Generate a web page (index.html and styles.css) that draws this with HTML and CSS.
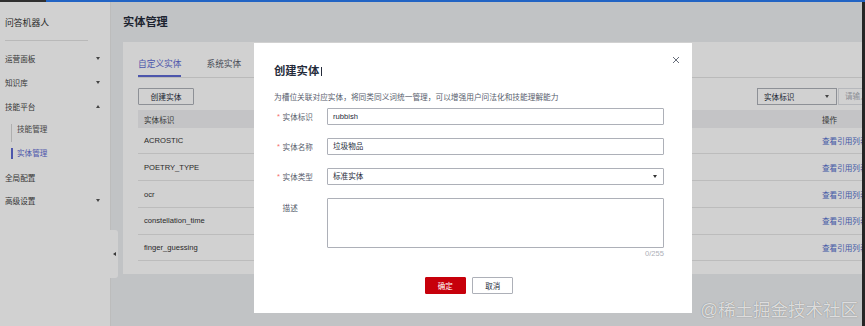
FILE: index.html
```html
<!DOCTYPE html>
<html lang="zh-CN">
<head>
    <meta charset="UTF-8">
    <meta name="viewport" content="width=device-width, initial-scale=1.0">
    <title>实体管理</title>
    <link rel="stylesheet" href="styles.css">
</head>
<body>
    <div class="topbar">
        <span class="topbar-dark"></span>
        <span class="topbar-blue"></span>
    </div>

    <div class="app">
        <aside class="sidebar">
            <div class="sidebar-title">问答机器人</div>
            <ul class="menu">
                <li class="menu-item">运营面板 <svg class="caret" viewBox="0 0 4 3"><path d="M0 0h4L2 3z"/></svg></li>
                <li class="menu-item">知识库 <svg class="caret" viewBox="0 0 4 3"><path d="M0 0h4L2 3z"/></svg></li>
                <li class="menu-item">技能平台 <svg class="caret" viewBox="0 0 4 3"><path d="M0 3h4L2 0z"/></svg></li>
                <li class="submenu">
                    <div class="submenu-item">技能管理</div>
                    <div class="submenu-item active">实体管理</div>
                </li>
                <li class="menu-item">全局配置</li>
                <li class="menu-item">高级设置 <svg class="caret" viewBox="0 0 4 3"><path d="M0 0h4L2 3z"/></svg></li>
            </ul>
            <div class="collapse-handle">
                <svg viewBox="0 0 3 4"><path d="M3 0v4L0 2z"/></svg>
            </div>
        </aside>

        <main class="main">
            <h1 class="page-title">实体管理</h1>

            <div class="card">
                <div class="tabs">
                    <div class="tab active">自定义实体</div>
                    <div class="tab">系统实体</div>
                </div>

                <div class="toolbar">
                    <button class="btn-outline">创建实体</button>
                    <div class="search">
                        <div class="search-select">实体标识 <svg class="caret" viewBox="0 0 4 3"><path d="M0 0h4L2 3z"/></svg></div>
                        <div class="search-input">请输入关键字</div>
                    </div>
                </div>

                <div class="table">
                    <div class="table-row table-head">
                        <div class="cell">实体标识</div>
                        <div class="cell">操作</div>
                    </div>
                    <div class="table-row">
                        <div class="cell">ACROSTIC</div>
                        <div class="cell link">查看引用列表</div>
                    </div>
                    <div class="table-row">
                        <div class="cell">POETRY_TYPE</div>
                        <div class="cell link">查看引用列表</div>
                    </div>
                    <div class="table-row">
                        <div class="cell">ocr</div>
                        <div class="cell link">查看引用列表</div>
                    </div>
                    <div class="table-row">
                        <div class="cell">constellation_time</div>
                        <div class="cell link">查看引用列表</div>
                    </div>
                    <div class="table-row">
                        <div class="cell">finger_guessing</div>
                        <div class="cell link">查看引用列表</div>
                    </div>
                </div>
            </div>
        </main>

        <div class="edge"></div>
    </div>

    <div class="mask"></div>

    <div class="dialog">
        <svg class="dialog-close" viewBox="0 0 8 8"><path d="M1 1l6 6M7 1L1 7"/></svg>
        <h2 class="dialog-title">创建实体<span class="caret-line"></span></h2>
        <p class="dialog-desc">为槽位关联对应实体，将同类同义词统一管理，可以增强用户问法化和技能理解能力</p>

        <div class="form">
            <div class="form-row">
                <label class="form-label"><span class="star">*</span>实体标识</label>
                <div class="field">rubbish</div>
            </div>
            <div class="form-row">
                <label class="form-label"><span class="star">*</span>实体名称</label>
                <div class="field">垃圾物品</div>
            </div>
            <div class="form-row">
                <label class="form-label"><span class="star">*</span>实体类型</label>
                <div class="field field-select">标准实体 <svg class="caret dark" viewBox="0 0 4 3"><path d="M0 0h4L2 3z"/></svg></div>
            </div>
            <div class="form-row form-row-area">
                <label class="form-label"><span class="star hidden">*</span>描述</label>
                <div class="field field-area"></div>
            </div>
            <div class="counter">0/255</div>
        </div>

        <div class="dialog-footer">
            <button class="btn-primary">确定</button>
            <button class="btn-default">取消</button>
        </div>
    </div>

    <div class="watermark">@稀土掘金技术社区</div>
</body>
</html>
```

FILE: styles.css
```css
* {
    margin: 0;
    padding: 0;
    box-sizing: border-box;
    font-family: 'Liberation Sans', 'Noto Sans CJK SC', sans-serif;
}

body {
    width: 865px;
    height: 326px;
    overflow: hidden;
    display: flex;
    flex-direction: column;
    background: #eceef1;
    color: #444;
    font-size: 7.6px;
}

ul {
    list-style: none;
}

/* top strip */
.topbar {
    display: flex;
    height: 2px;
}

.topbar-dark {
    width: 46px;
    background: #3b3b3b;
}

.topbar-blue {
    flex: 1;
    background: #2a7bf0;
}

.app {
    flex: 1;
    display: flex;
    min-height: 0;
}

/* sidebar */
.sidebar {
    position: relative;
    width: 111px;
    background: #fff;
    border-right: 1px solid #e6e6e6;
}

.sidebar-title {
    margin-left: 5px;
    width: 83px;
    height: 39px;
    padding-top: 14.7px;
    line-height: 12px;
    font-size: 8.8px;
    color: #333;
    border-bottom: 1px solid #e2e2e2;
}

.menu {
    margin-top: 5.8px;
}

.menu-item {
    display: flex;
    align-items: center;
    justify-content: space-between;
    height: 23.7px;
    padding: 0 10px 0 5px;
    color: #444;
}

.caret {
    width: 4px;
    height: 3px;
    fill: #555;
}

.caret.dark {
    fill: #333;
}

.submenu-item {
    position: relative;
    height: 23.7px;
    line-height: 23.7px;
    padding-left: 17px;
    color: #555;
}

.submenu-item::before {
    content: '';
    position: absolute;
    left: 11px;
    top: 6px;
    bottom: 0;
    width: 1px;
    background: #d6d6d6;
}

.submenu-item.active {
    color: #5e6ad2;
}

.submenu-item.active::before {
    top: 6.5px;
    bottom: 6.5px;
    width: 1.5px;
    background: #5e6ad2;
}

.collapse-handle {
    position: absolute;
    right: -8px;
    top: 228px;
    width: 8px;
    height: 48px;
    background: #fff;
    border-radius: 0 3px 3px 0;
    display: flex;
    align-items: center;
    justify-content: center;
}

.collapse-handle svg {
    width: 3px;
    height: 4px;
    fill: #444;
}

/* main */
.main {
    flex: 1;
    min-width: 0;
    overflow: hidden;
    padding-left: 12px;
}

.page-title {
    margin-top: 13px;
    line-height: 14px;
    font-size: 11.2px;
    font-weight: bold;
    color: #252b3a;
}

.card {
    width: 780px;
    margin-top: 13px;
    background: #fff;
    padding: 0 15px 13px;
}

.tabs {
    display: flex;
    gap: 25px;
    height: 36px;
    border-bottom: 1px solid #e3e3e3;
}

.tab {
    height: 35px;
    padding-top: 16px;
    line-height: 12px;
    font-size: 8.7px;
    color: #575d6c;
    border-bottom: 2px solid transparent;
}

.tab.active {
    color: #5e6ad2;
    border-bottom-color: #5e6ad2;
}

.toolbar {
    display: flex;
    align-items: center;
    margin-top: 10px;
    height: 17px;
}

.btn-outline {
    width: 56px;
    height: 17px;
    background: #fff;
    border: 1px solid #adb0b8;
    border-radius: 1px;
    font-size: 7.8px;
    color: #252b3a;
}

.search {
    display: flex;
    margin-left: auto;
    height: 17px;
}

.search-select {
    display: flex;
    align-items: center;
    justify-content: space-between;
    width: 80px;
    padding: 0 7px 0 6px;
    border: 1px solid #adb0b8;
    color: #252b3a;
}

.search-input {
    width: 50px;
    margin-left: 1px;
    padding-left: 6px;
    line-height: 15px;
    border: 1px solid #dfe1e6;
    color: #adb0b8;
    white-space: nowrap;
    overflow: hidden;
}

.table {
    margin-top: 5.4px;
}

.table-row {
    display: grid;
    grid-template-columns: 678px 1fr;
    align-items: center;
    height: 26.7px;
    border-bottom: 1px solid #e6e6e6;
    color: #333;
}

.table-head {
    height: 17.4px;
    background: #eff0f2;
    border-bottom: none;
    color: #444;
}

.cell {
    padding-left: 6px;
    white-space: nowrap;
}

.link {
    color: #526ecc;
}

.edge {
    width: 3px;
    background: #2e2e2e;
}

/* modal */
.mask {
    position: absolute;
    inset: 0;
    background: rgba(0, 0, 0, 0.18);
}

.dialog {
    position: absolute;
    left: 254px;
    top: 43px;
    width: 438px;
    height: 270px;
    background: #fff;
    padding: 0 28px 0 20px;
    color: #575d6c;
}

.dialog-close {
    position: absolute;
    right: 12px;
    top: 13px;
    width: 8px;
    height: 8px;
    stroke: #575d6c;
    stroke-width: 0.9;
    fill: none;
}

.dialog-title {
    display: flex;
    align-items: center;
    padding-top: 21px;
    line-height: 14px;
    font-size: 11.3px;
    font-weight: bold;
    color: #252b3a;
}

.caret-line {
    width: 1px;
    height: 9px;
    margin-left: 1.5px;
    background: #252b3a;
}

.dialog-desc {
    margin-top: 14.7px;
    line-height: 10px;
    font-size: 7.7px;
    color: #575d6c;
}

.form {
    margin-top: 5px;
}

.form-row {
    display: flex;
    margin-bottom: 13px;
}

.form-label {
    display: flex;
    align-items: center;
    gap: 2.6px;
    width: 53px;
    height: 17px;
    padding-left: 3px;
    color: #575d6c;
}

.star {
    color: #f66f6a;
    font-size: 7.6px;
}

.star.hidden {
    visibility: hidden;
}

.form-row-area {
    margin-bottom: 0;
}

.form-row-area .form-label {
    align-items: flex-start;
    padding-top: 4px;
}

.field {
    flex: 1;
    height: 17px;
    padding-left: 5px;
    line-height: 15px;
    border: 1px solid #adb0b8;
    border-radius: 1px;
    color: #252b3a;
}

.field-select {
    display: flex;
    align-items: center;
    justify-content: space-between;
    padding-right: 6px;
}

.field-area {
    height: 50px;
}

.counter {
    margin-top: 1.8px;
    line-height: 10px;
    text-align: right;
    color: #adb0b8;
}

.dialog-footer {
    display: flex;
    justify-content: center;
    gap: 6.4px;
    margin-top: 17.4px;
}

.btn-primary,
.btn-default {
    width: 41.3px;
    height: 17.3px;
    border-radius: 1px;
    font-size: 7.5px;
}

.btn-primary {
    background: #c7000b;
    border: 1px solid #c7000b;
    color: #fff;
}

.btn-default {
    background: #fff;
    border: 1px solid #adb0b8;
    color: #252b3a;
}

.watermark {
    position: absolute;
    right: 7px;
    bottom: 6px;
    font-size: 17.5px;
    line-height: 20px;
    color: rgba(255, 255, 255, 0.75);
    text-shadow: 0 0 1px rgba(0, 0, 0, 0.45);
    white-space: nowrap;
}
```
